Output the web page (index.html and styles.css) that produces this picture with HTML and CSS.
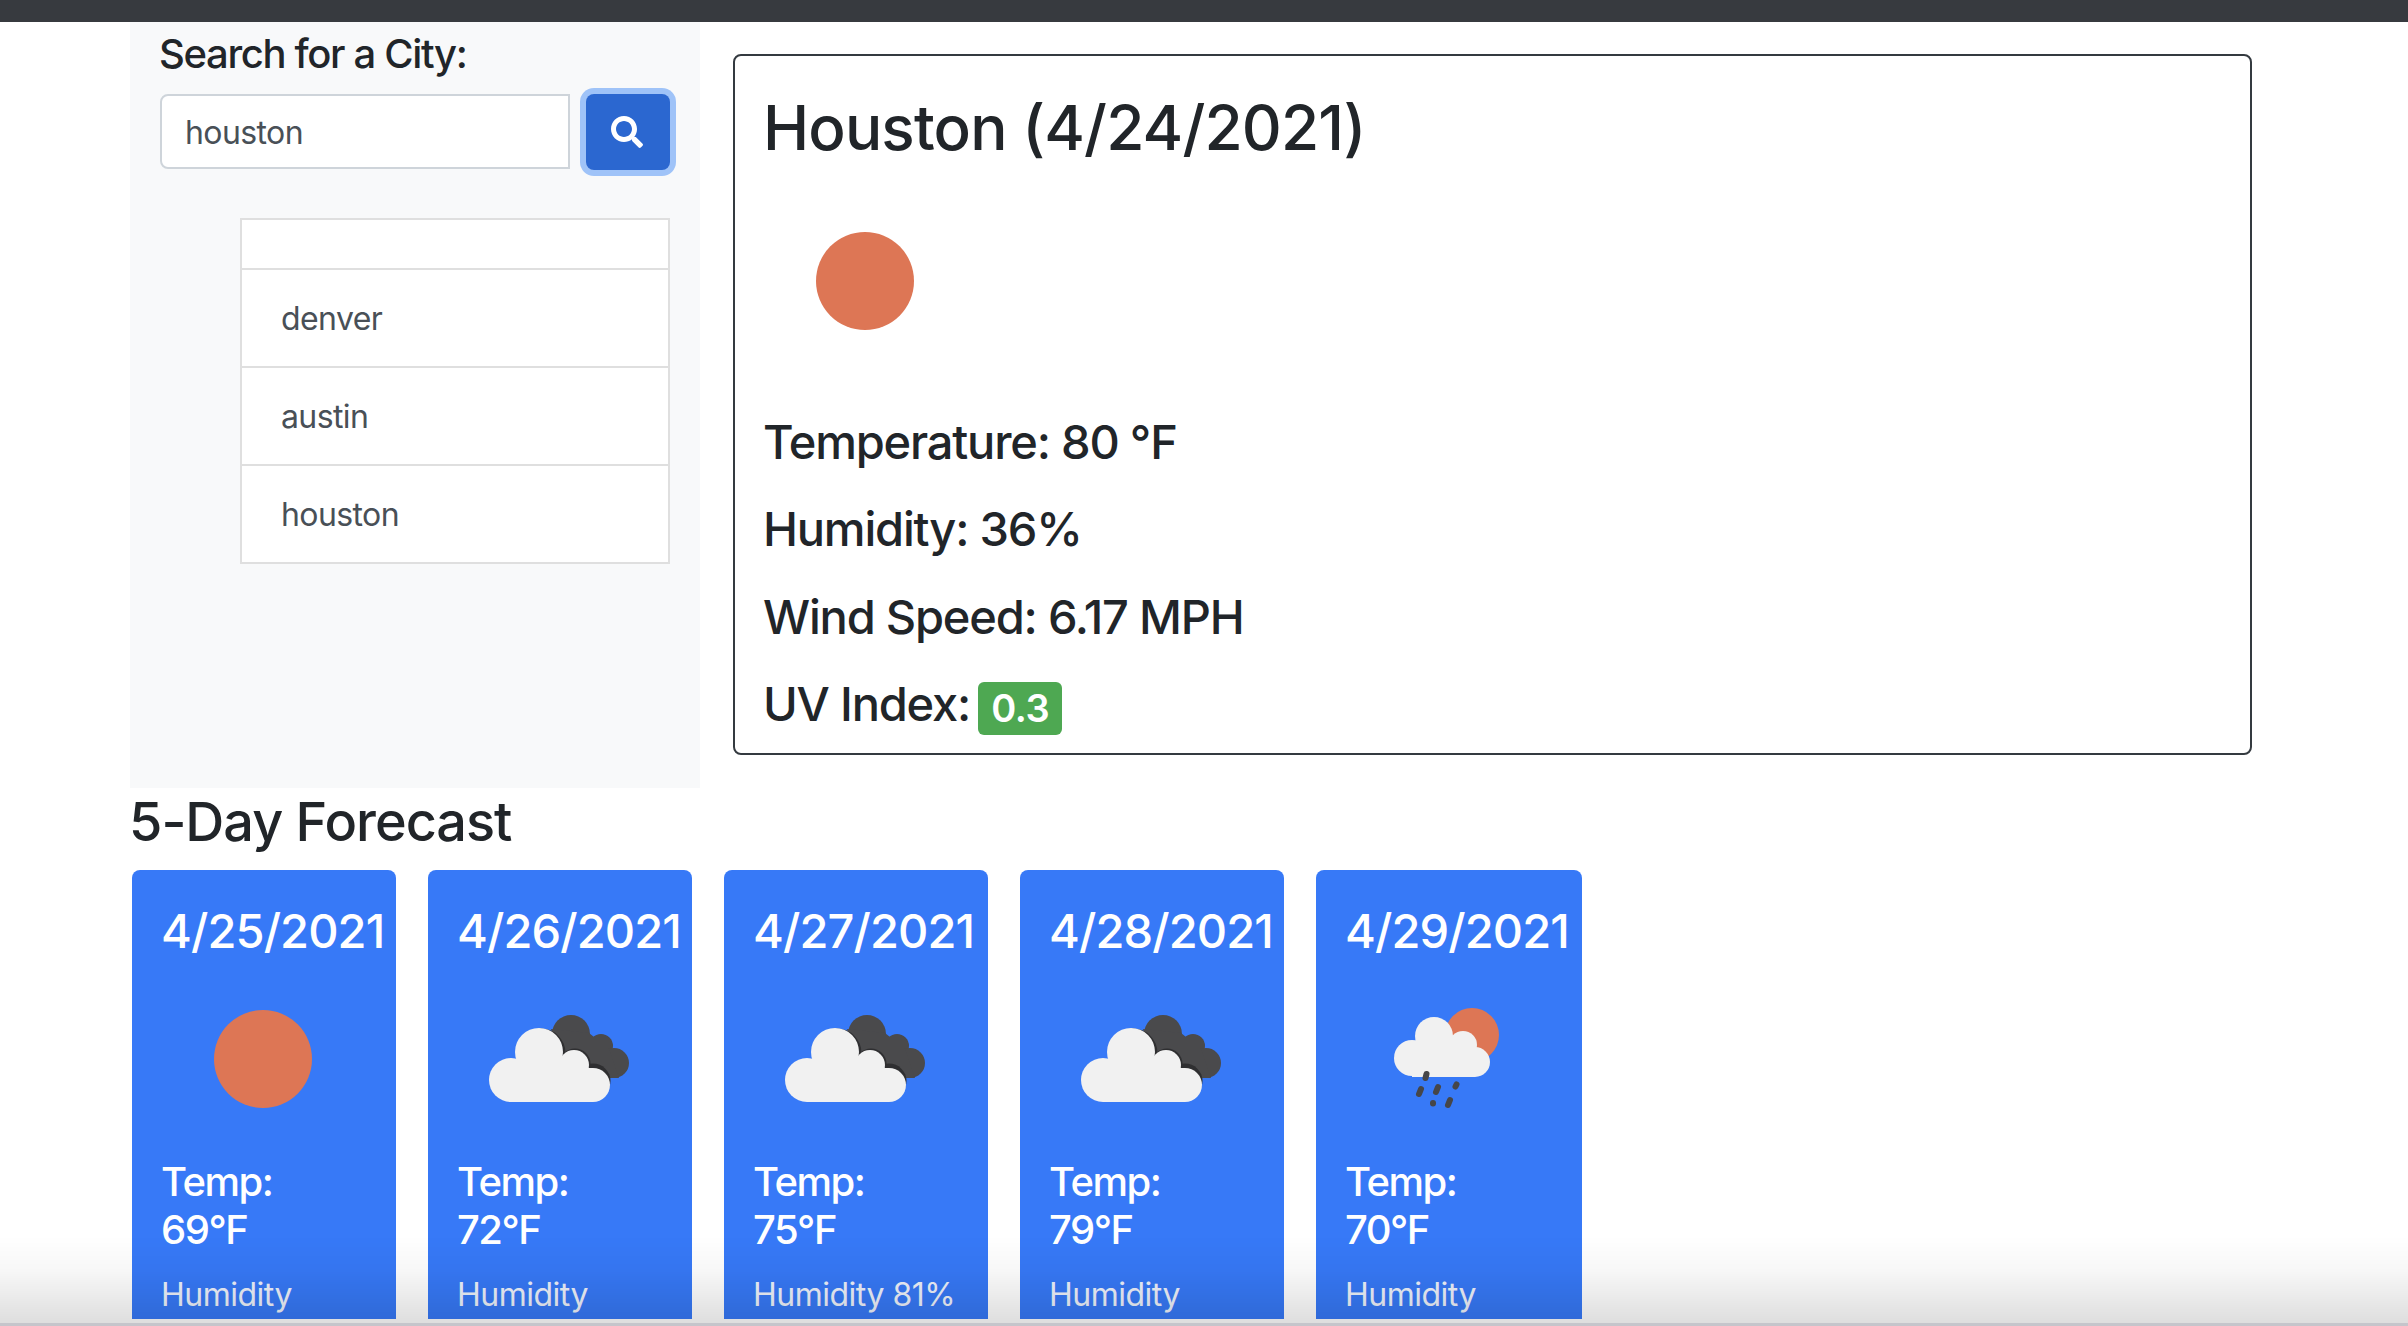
FILE: index.html
```html
<!DOCTYPE html>
<html lang="en">
<head>
<meta charset="utf-8">
<title>Weather Dashboard</title>
<link rel="stylesheet" href="styles.css">
</head>
<body>
<svg class="defs" aria-hidden="true">
  <symbol id="sun" viewBox="0 0 200 198"><circle cx="100" cy="100" r="49" fill="#dd7655"/></symbol>
  <symbol id="clouds" viewBox="0 0 200 198">
    <g fill="#4a4a4c">
      <circle cx="112" cy="75" r="19"/><circle cx="142" cy="87" r="12"/><circle cx="155" cy="104" r="15"/>
      <path d="M92 70 L130 74 L150 90 L160 119 L105 119 Z"/>
    </g>
    <g fill="#2f2f31">
      <circle cx="82" cy="94" r="24.500"/><circle cx="116" cy="105" r="15.500"/><circle cx="134" cy="122" r="17.500"/>
    </g>
    <g fill="#f1f1f1">
      <circle cx="52" cy="121" r="22"/><circle cx="80" cy="93" r="24"/><circle cx="115" cy="106" r="15"/><circle cx="134" cy="126" r="17"/>
      <path d="M52 143 V100 H115 L130 109 H134 V143 Z"/>
    </g>
  </symbol>
  <symbol id="rain" viewBox="0 0 200 198">
    <g transform="translate(-1 0)">
      <circle cx="126" cy="76" r="27" fill="#dd7655"/>
      <g fill="#f1f1f1">
        <circle cx="66" cy="99" r="18"/><circle cx="88" cy="77" r="19"/><circle cx="117" cy="86" r="14"/><circle cx="129" cy="103" r="15"/>
        <rect x="66" y="85" width="63" height="33"/>
      </g>
      <g stroke="#464648" stroke-width="6" stroke-linecap="round">
        <path d="M80.500 115 L79.500 119"/><path d="M75 130 L73 135"/><path d="M92 128 L90 133"/>
        <path d="M110.500 125.500 L109.500 127.500"/><path d="M87 144 L87 144.500"/><path d="M104 141 L102 146"/>
      </g>
    </g>
  </symbol>
</svg>
<div class="topbar"></div>
<div class="top-row">
  <aside class="sidebar">
    <label class="search-label" for="city">Search for a City:</label>
    <div class="search-row">
      <input class="search-input" id="city" type="text" value="houston">
      <button class="search-btn" type="button" aria-label="Search">
        <svg class="search-icon" viewBox="0 0 512 512"><path fill="#fff" d="M505 442.7L405.3 343c-4.5-4.5-10.6-7-17-7H372c27.6-35.3 44-79.7 44-128C416 93.1 322.9 0 208 0S0 93.1 0 208s93.1 208 208 208c48.3 0 92.7-16.4 128-44v16.3c0 6.4 2.5 12.5 7 17l99.7 99.7c9.4 9.4 24.6 9.4 33.9 0l28.3-28.3c9.4-9.4 9.4-24.6.1-34zM208 336c-70.7 0-128-57.2-128-128 0-70.7 57.2-128 128-128 70.7 0 128 57.2 128 128 0 70.7-57.2 128-128 128z"/></svg>
      </button>
    </div>
    <ul class="history">
      <li class="history-empty"></li>
      <li class="history-item">denver</li>
      <li class="history-item">austin</li>
      <li class="history-item">houston</li>
    </ul>
  </aside>
  <section class="current">
    <h2 class="current-title">Houston (4/24/2021)</h2>
    <svg class="current-icon"><use href="#sun"/></svg>
    <p class="current-line">Temperature: 80 °F</p>
    <p class="current-line">Humidity: 36%</p>
    <p class="current-line">Wind Speed: 6.17 MPH</p>
    <p class="current-line">UV Index: <span class="uv">0.3</span></p>
  </section>
</div>
<h3 class="forecast-title">5-Day Forecast</h3>
<div class="forecast">
  <article class="card">
    <h4 class="card-date">4/25/2021</h4>
    <svg class="card-icon"><use href="#sun"/></svg>
    <h5 class="card-temp">Temp:<br>69°F</h5>
    <p class="card-hum">Humidity</p>
  </article>
  <article class="card">
    <h4 class="card-date">4/26/2021</h4>
    <svg class="card-icon"><use href="#clouds"/></svg>
    <h5 class="card-temp">Temp:<br>72°F</h5>
    <p class="card-hum">Humidity</p>
  </article>
  <article class="card">
    <h4 class="card-date">4/27/2021</h4>
    <svg class="card-icon"><use href="#clouds"/></svg>
    <h5 class="card-temp">Temp:<br>75°F</h5>
    <p class="card-hum">Humidity 81%</p>
  </article>
  <article class="card">
    <h4 class="card-date">4/28/2021</h4>
    <svg class="card-icon"><use href="#clouds"/></svg>
    <h5 class="card-temp">Temp:<br>79°F</h5>
    <p class="card-hum">Humidity</p>
  </article>
  <article class="card card-last">
    <h4 class="card-date">4/29/2021</h4>
    <svg class="card-icon"><use href="#rain"/></svg>
    <h5 class="card-temp">Temp:<br>70°F</h5>
    <p class="card-hum">Humidity</p>
  </article>
</div>
<div class="fade"></div>
</body>
</html>
```
FILE: styles.css
```css
* { box-sizing: border-box; }
html, body { height: 100%; overflow: hidden; }
body {
  margin: 0;
  background: #fff;
  color: #212529;
  font-family: Inter, "Liberation Sans", sans-serif;
}
.defs { display: none; }
.topbar { height: 22px; background: #373a3f; }
.top-row { display: flex; align-items: flex-start; padding-left: 130px; }

.sidebar { width: 570px; height: 766px; background: #f8f9fa; padding: 8px 30px 0; }
.search-label { display: block; font-size: 40px; font-weight: 500; letter-spacing: -1.35px; line-height: 48px; margin-bottom: 16px; margin-left: -1px; }
.search-row { display: flex; gap: 16px; }
.search-input {
  width: 410px; height: 75px; padding: 2px 23px 0;
  border: 2px solid #ced4da; border-radius: 8px 0 0 8px;
  background: #fff; color: #495057;
  font: 32px Inter, "Liberation Sans", sans-serif;
  letter-spacing: -.6px;
}
.search-btn {
  width: 84px; height: 76px; padding: 0;
  display: flex; align-items: center; justify-content: center;
  background: #2b67d0; border: 0; border-radius: 8px;
  box-shadow: 0 0 0 6px #9fc3f8;
}
.search-icon { width: 32px; height: 32px; margin-left: -2px; }
.history { list-style: none; margin: 48px 0 0 80px; padding: 0; width: 430px; border: 2px solid #dfdfdf; border-bottom: 0; background: #fff; }
.history-empty { height: 50px; border-bottom: 2px solid #dfdfdf; }
.history-item { height: 98px; padding: 1px 39px 0; line-height: 96px; font-size: 32px; letter-spacing: -.6px; color: #495057; border-bottom: 2px solid #dfdfdf; }

.current { width: 1519px; height: 701px; margin: 32px 0 0 33px; padding: 0 28px; border: 2px solid #343a40; border-radius: 8px; background: #fff; }
.current-title { margin: 0; padding-top: 33px; font-size: 62px; font-weight: 500; letter-spacing: -.85px; line-height: 77px; }
.current-icon { display: block; width: 200px; height: 198px; margin: 15px 0 33.5px 2px; }
.current-line { margin: 0 0 30px; font-size: 47px; font-weight: 500; letter-spacing: -1.2px; line-height: 57.5px; white-space: nowrap; }
.uv { display: inline-block; margin-left: -3px; padding: 0 13px; background: #4ea852; color: #fff; border-radius: 6px; font-size: 38px; font-weight: 600; letter-spacing: -.5px; line-height: 53px; vertical-align: -1px; }

.forecast-title { margin: 0 0 15px 129px; font-size: 54px; font-weight: 500; letter-spacing: -1px; line-height: 67px; }
.forecast { display: flex; gap: 32px; margin-left: 132px; }
.card { flex: none; width: 264px; padding: 31px 29px 0; background: #3779f7; border-radius: 8px 8px 0 0; color: #fff; white-space: nowrap; }
.card-last { width: 266px; }
.card-date { margin: 0; font-size: 47px; font-weight: 500; letter-spacing: -.9px; line-height: 60px; }
.card-icon { display: block; width: 200px; height: 198px; margin: -2px 0 1px 2px; }
.card-temp { margin: 0 0 17px; font-size: 40px; font-weight: 500; letter-spacing: -1.5px; line-height: 48px; }
.card-hum { margin: 0; font-size: 32px; letter-spacing: -.5px; line-height: 48px; color: #eef2fb; }

.fade {
  position: fixed; left: 0; right: 0; bottom: 0; height: 90px;
  border-bottom: 3px solid rgba(150, 150, 160, .55);
  background: linear-gradient(to bottom, rgba(0, 0, 0, 0), rgba(0, 0, 0, .03) 40%, rgba(0, 0, 0, .13));
  pointer-events: none;
}
```
